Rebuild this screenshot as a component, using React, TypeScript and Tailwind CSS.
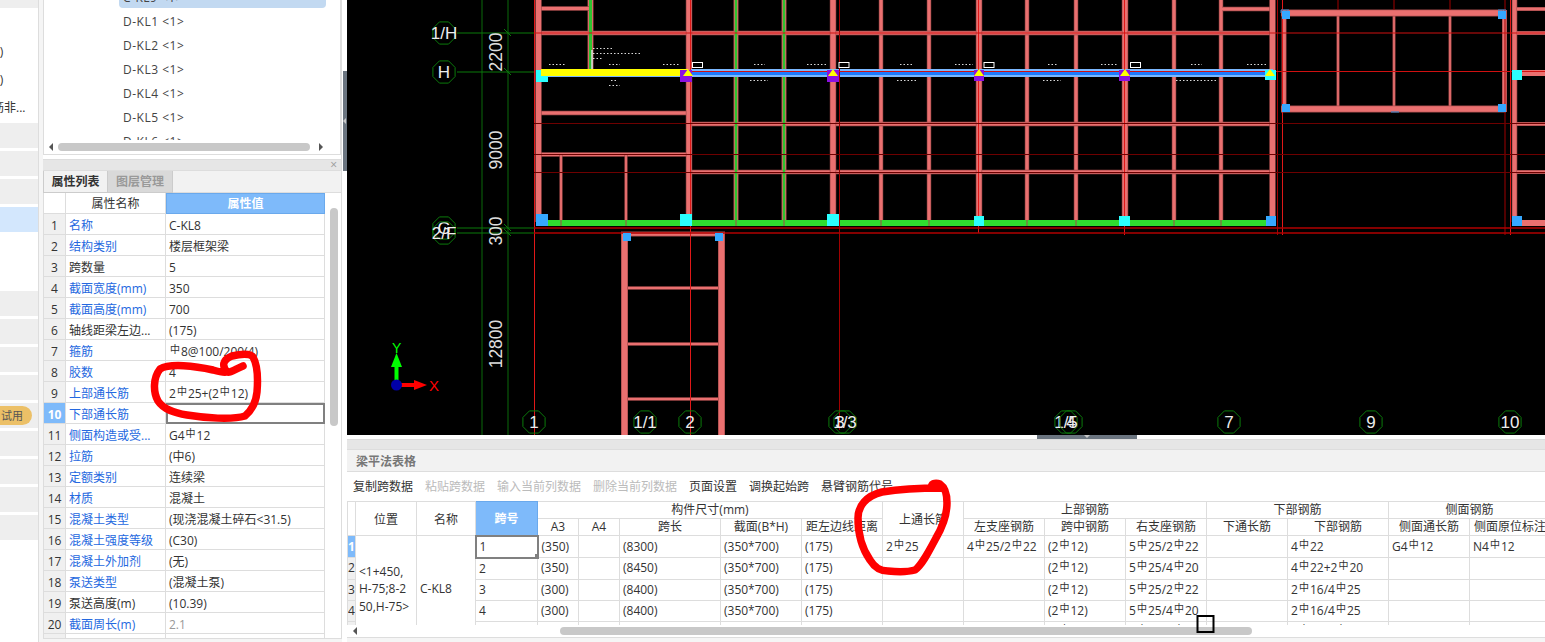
import React from "react";

const FONT = { fontFamily: '"Open Sans","Noto Sans CJK SC",sans-serif' };
const names = ["名称","结构类别","跨数量","截面宽度(mm)","截面高度(mm)","轴线距梁左边...","箍筋","胶数","上部通长筋","下部通长筋","侧面构造或受...","拉筋","定额类别","材质","混凝土类型","混凝土强度等级","混凝土外加剂","泵送类型","泵送高度(m)","截面周长(m)"];
const vals = ["C-KL8","楼层框架梁","5","350","700","(175)","⌀8@100/200(4)","4","2⌀25+(2⌀12)","","G4⌀12","(中6)","连续梁","混凝土","(现浇混凝土碎石<31.5)","(C30)","(无)","(混凝土泵)","(10.39)","2.1"];

function Rebar({ t }: { t: string }) {
  const parts = t.split("⌀");
  return (
    <>
      {parts.map((p, i) => (
        <React.Fragment key={i}>
          {i > 0 && <span className="relative -top-[3px] inline-block w-[12px] text-center text-[10px] leading-[10px]">中</span>}
          {p}
        </React.Fragment>
      ))}
    </>
  );
}

const rows = [
  ["1","(350)","","(8300)","(350*700)","(175)","2⌀25","4⌀25/2⌀22","(2⌀12)","5⌀25/2⌀22","","4⌀22","G4⌀12","N4⌀12"],
  ["2","(350)","","(8450)","(350*700)","(175)","","","(2⌀12)","5⌀25/4⌀20","","4⌀22+2⌀20","",""],
  ["3","(300)","","(8400)","(350*700)","(175)","","","(2⌀12)","5⌀25/2⌀22","","2⌀16/4⌀25","",""],
  ["4","(300)","","(8400)","(350*700)","(175)","","","(2⌀12)","5⌀25/4⌀20","","2⌀16/4⌀25","",""],
  ["","","","","","","","","(2⌀12)","5⌀25/4⌀20","","2⌀16/4⌀25","",""],
];

function Beam({ d, w }: { d: string; w: number }) {
  return (
    <>
      <path d={d} stroke="#a34a4a" strokeWidth={w} fill="none" />
      <path d={d} stroke="#ea7070" strokeWidth={Math.max(w - 1.4, 1)} fill="none" />
    </>
  );
}

const blocks: [number, number, number, number, string][] = [
  [536,70,12,12,"#2bffff"],[680,70,12,12,"#8b10e0"],[827,70,12,12,"#8b10e0"],[974,70,10,11,"#8b10e0"],[1119,70,11,11,"#8b10e0"],[1265,70,11,10,"#2bffff"],[1512,70,10,10,"#2bffff"],
  [536,214,12,12,"#35a8ff"],[680,214,12,12,"#2bffff"],[827,214,12,12,"#2bffff"],[974,216,10,10,"#2bffff"],[1119,216,11,10,"#2bffff"],[1266,216,10,10,"#35a8ff"],[1512,216,10,10,"#35a8ff"],
  [1282,11,8,8,"#35a8ff"],[1498,11,8,8,"#35a8ff"],[1282,104,8,8,"#35a8ff"],[1498,104,8,8,"#35a8ff"],[623,233,8,8,"#35a8ff"],[715,233,8,8,"#35a8ff"],
];

const bubbles: [number, number, string][] = [
  [444,33,"1/H"],[444,72,"H"],[444,228,"G"],[444,233,"2/F"],[534,422,"1"],[645,422,"1/1"],[690,422,"2"],[840,422,"3"],[845,422,"1/3"],[1066,422,"1/5"],[1071,422,"4"],[1229,422,"7"],[1371,422,"9"],[1510,422,"10"],
];

const dims: [number, number, string][] = [[502,52,"2200"],[502,150,"9000"],[502,231,"300"],[502,344,"12800"]];

function Cad() {
  return (
    <svg width="1198" height="435" viewBox="347 0 1198 435" className="block" fontFamily="Liberation Sans, sans-serif">
      <rect x="347" y="0" width="1198" height="435" fill="#000" />
      <path d="M482 0V435M508 0V435" stroke="#0b6b0b" strokeWidth="1" />
      <path d="M457 33H535M457 72H535M457 228H535M457 233H535" stroke="#0a7a0a" strokeWidth="1" />
      <path d="M504 29L511 36M504 68L511 75M504 224L511 231M504 229L511 236" stroke="#0a7a0a" strokeWidth="1" />

      <Beam d="M881 0V222M929 0V222M1027 0V222M1076 0V222M1174 0V222M1221 0V222" w={4.4} />
      <Beam d="M736 0V222M784 0V222" w={5} />
      <Beam d="M590.5 0V70" w={6} />
      <Beam d="M536 33H1275M536 8.5H590M536 113H690M690 124H1275M536 154.5H690M690 172H1275M1222 9H1274" w={4.4} />
      <Beam d="M561 155V226M626 155V226" w={3.2} />
      <Beam d="M538.5 0V222M689 0V222M833 0V222M979 0V222M1125 0V222M1272.5 0V222" w={6.4} />
      <Beam d="M1514.5 0V222" w={5.5} />
      <Beam d="M1517 9H1545M1517 33H1545M1517 124H1545M1517 172H1545" w={4} />
      <path d="M1520 73H1545M1517 223H1545" stroke="#ea7070" strokeWidth="6" />
      <Beam d="M1338 14V108M1394 14V108M1450 14V108" w={3} />
      <Beam d="M1281 13H1506M1281 109H1506" w={7} />
      <Beam d="M1284 10V112M1504.5 10V112" w={5} />
      <Beam d="M621 234H725" w={5} />
      <Beam d="M624.5 234V435M721.5 234V435" w={7} />
      <Beam d="M628 288H718M628 344H718M628 399H718" w={3.4} />

      <path d="M590.5 0V69" stroke="#2fc22f" strokeWidth="3" />
      <path d="M736 0V220M784 0V220" stroke="#2fc22f" strokeWidth="2.4" />

      <rect x="540" y="220" width="733" height="6" fill="#2fdc2f" />
      <path d="M561 220V226M626 220V226M736 220V226M784 220V226M881 220V226M929 220V226M1027 220V226M1076 220V226M1174 220V226M1221 220V226" stroke="#a34a4a" strokeWidth="1" />

      <rect x="690" y="69" width="583" height="8" fill="#7ab8ff" />
      <rect x="690" y="71" width="583" height="4" fill="#1e7bff" />
      <rect x="541" y="69" width="147" height="7" fill="#ffff00" />
      <rect x="541" y="76" width="147" height="1" fill="#7ab8ff" />

      <path d="M534.5 0V435M690.5 0V435M978.5 0V233M1124.5 0V235M1282.5 0V235M1510.5 0V235" stroke="#e01818" strokeWidth="1" />
      <path d="M839.5 0V430M1277.5 0V235M1505 0V235M1338 0V10M1394 0V10M1450 0V10" stroke="#a00000" strokeWidth="1" />
      <path d="M690 71.5H1545M534 33H1545" stroke="#d01010" strokeWidth="1" />
      <path d="M534 123.5H1545M534 154.5H1545M534 172.5H1545" stroke="#6e0000" strokeWidth="1" />
      <path d="M534 228H1545M534 233H1545" stroke="#b00000" strokeWidth="1.4" />

      {blocks.map(([x,y,w,h,c],i)=>(
        <rect key={i} x={x} y={y} width={w} height={h} fill={c} />
      ))}
      <rect x="541" y="69" width="139" height="7" fill="#ffff00" />
      {[688,833,979,1125,1270].map((x)=>(
        <path key={x} d={`M${x-5} 76L${x} 69L${x+5} 76Z`} fill="#ff0" />
      ))}
      <path d="M1281 10H1506V112H1281Z" fill="none" stroke="#2d8fd8" strokeWidth="1" strokeDasharray="8 209" />

      {[692,838.5,983.5,1130].map((x)=>(
        <rect key={x} x={x+0.5} y={62.5} width={10} height={5} fill="#000" stroke="#fff" strokeWidth="1" />
      ))}
      <path d="M592 50V69" stroke="#ddd" strokeWidth="1.5" />
      <g stroke="#fff" strokeWidth="1" strokeDasharray="1.5 2" opacity="0.85">
        <path d="M593 48.5H612M593 53.5H641M593 58.5H602M549 64.5H566M609 64.5H620M663 64.5H680M754 64.5H765M807 64.5H827M900 64.5H913M955 64.5H973M1048 64.5H1057M1101 64.5H1118M1191 64.5H1202M1247 64.5H1266" />
        <path d="M611 80.5H618M609 85.5H620M750 80.5H768M897 80.5H916M1043 80.5H1061M1176 80.5H1217" />
      </g>

      {bubbles.map(([x,y,t],i)=>(
        <g key={i}>
          <polygon points={Array.from({length:8},(_,k)=>{const a=Math.PI/8+k*Math.PI/4;return `${x+Math.cos(a)*12},${y+Math.sin(a)*12}`}).join(" ")} fill="none" stroke="#0b7a0b" />
          <text x={x} y={y+6} textAnchor="middle" fill="#eee" fontSize="17">{t}</text>
        </g>
      ))}
      {dims.map(([x,y,t])=>(
        <text key={t} transform={`rotate(-90 ${x} ${y})`} x={x} y={y} textAnchor="middle" fill="#ddd" fontSize="17.5">{t}</text>
      ))}

      <path d="M396.5 384V364" stroke="#0f0" strokeWidth="4" />
      <path d="M396.5 353L391 367H402Z" fill="#0f0" />
      <path d="M397 385H416" stroke="#f00" strokeWidth="4" />
      <path d="M427 385L414 380V390Z" fill="#f00" />
      <circle cx="396.5" cy="385" r="5.5" fill="#0000a8" />
      <text x="392" y="353" fill="#0f0" fontSize="14">Y</text>
      <text x="429" y="391" fill="#f00" fontSize="15">X</text>
    </svg>
  );
}

export default function App() {
  return (
    <div className="relative flex w-[1545px] h-[642px] overflow-hidden bg-[#f5f5f5] text-[12px] text-[#333]" style={FONT}>
      {/* left strip */}
      <div className="flex flex-col w-[39px] h-full bg-white border-r border-[#ddd] shrink-0 overflow-hidden">
        <div className="h-[8px] bg-[#eeeeee]" />
        <div className="h-[30px]" />
        <div className="h-[28px] leading-[28px] -ml-[7px] whitespace-nowrap">2)</div>
        <div className="h-[28px] leading-[28px] -ml-[7px] whitespace-nowrap">2)</div>
        <div className="h-[28px] leading-[28px] -ml-[8px] whitespace-nowrap">筋非...</div>
        <div className="h-[1px]" />
        <div className="flex flex-col gap-[3px]">
          <div className="h-[25px] bg-[#eeeeee]" />
          <div className="h-[25px] bg-[#eeeeee]" />
          <div className="h-[25px] bg-[#eeeeee]" />
          <div className="h-[25px] bg-[#d3e7fd]" />
        </div>
        <div className="h-[59px]" />
        <div className="flex flex-col gap-[3px]">
          <div className="h-[25px] bg-[#eeeeee]" />
          <div className="h-[25px] bg-[#eeeeee]" />
          <div className="h-[25px] bg-[#eeeeee]" />
          <div className="h-[25px] bg-[#eeeeee]" />
          <div className="h-[25px] bg-[#eeeeee] pt-[3px]">
            <div className="h-[19px] w-[32px] rounded-r-full bg-[#ecc067] text-[11px] leading-[19px] pl-[1px] text-[#555]">试用</div>
          </div>
          <div className="h-[25px] bg-[#eeeeee]" />
          <div className="h-[25px] bg-[#eeeeee]" />
          <div className="h-[25px] bg-[#eeeeee]" />
          <div className="h-[25px] bg-[#eeeeee]" />
        </div>
      </div>

      <div className="w-[4px] shrink-0" />

      {/* middle panel */}
      <div className="flex flex-col w-[299px] h-[639px] shrink-0 bg-white border-r border-b border-[#ddd]">
        <div className="h-[155px] border-x border-b border-[#ddd] relative overflow-hidden flex flex-col shrink-0">
          <div className="h-[8px] ml-[75px] mr-[14px] bg-[#c2d9f1] rounded-b overflow-hidden shrink-0">
            <div className="-mt-[14px] pl-[4px] leading-[24px] tracking-[0.5px] text-[#444] whitespace-nowrap">C-KL9 &lt;1&gt;</div>
          </div>
          <div className="flex-1 pl-[79px] pt-[2px] text-[#444]">
            {[1,2,3,4,5,6].map((n)=>(
              <div key={n} className="h-[24px] leading-[24px] tracking-[0.5px] whitespace-nowrap">D-KL{n} &lt;1&gt;</div>
            ))}
          </div>
          <div className="absolute left-0 right-0 bottom-0 h-[14px] bg-white flex items-center">
            <div className="w-0 h-0 ml-[5px] border-y-[4px] border-y-transparent border-r-[4px] border-r-[#555]" />
            <div className="ml-[5px] w-[252px] h-[8px] rounded-full bg-[#c8c8c8]" />
            <div className="w-0 h-0 ml-[9px] border-y-[4px] border-y-transparent border-l-[4px] border-l-[#555]" />
          </div>
        </div>
        <div className="h-[4px] bg-white shrink-0" />
        <div className="h-[12px] bg-[#e6e6e6] border-y border-[#ddd] flex justify-end items-center pr-[4px] text-[#999] text-[12px] leading-none shrink-0">×</div>
        <div className="h-[22px] bg-[#f2f2f2] flex shrink-0">
          <div className="w-[65px] border border-t-0 border-[#ccc] text-center font-bold leading-[21px]">属性列表</div>
          <div className="w-[65px] border-r border-b border-[#ccc] bg-[#d9d9d9] text-center font-bold text-[#999] leading-[21px]">图层管理</div>
          <div className="flex-1 border-b border-[#ddd]" />
        </div>
        <div className="flex flex-1 min-h-0 overflow-hidden border-l border-[#ddd]">
          <div className="w-[282px]">
            <div className="flex h-[21px] leading-[22px]">
              <div className="w-[22px] border-r border-b border-[#ddd]" />
              <div className="w-[100px] border-r border-b border-[#ddd] text-center">属性名称</div>
              <div className="flex-1 bg-[#7ebafa] border border-[#6aa9ec] text-center font-bold text-white leading-[20px]">属性值</div>
            </div>
            {names.map((n,i)=>{
              const sel=i===9;
              const plain=i===2||i===5||i===18;
              return (
                <div key={n} className="flex h-[21px] leading-[23px]">
                  <div className={`w-[22px] border-r border-b border-[#ddd] text-center ${sel?"bg-[#7ebafa] text-white font-bold":"bg-[#f0f0f0]"}`}>{i+1}</div>
                  <div className={`w-[100px] border-r border-b border-[#ddd] pl-[3px] whitespace-nowrap ${plain?"text-[#333]":"text-[#2468e0]"}`}>{n}</div>
                  <div className={`flex-1 pl-[3px] whitespace-nowrap ${sel?"border-2 border-[#808080]":"border-r border-b border-[#ddd]"} ${i===19?"text-[#999]":""}`}><Rebar t={vals[i]} /></div>
                </div>
              );
            })}
            <div className="flex h-[4px]">
              <div className="w-[22px] border-r border-[#ddd] bg-[#f0f0f0]" />
              <div className="w-[100px] border-r border-[#ddd]" />
              <div className="flex-1 border-r border-[#ddd]" />
            </div>
          </div>
          <div className="w-[16px] relative">
            <div className="absolute left-[5px] top-[15px] w-[8px] h-[218px] rounded-full bg-[#c8c8c8]" />
          </div>
        </div>
      </div>

      {/* vertical splitter */}
      <div className="relative w-[5px] shrink-0 bg-white">
        <div className="absolute left-[1px] top-[71px] w-[4px] h-[100px] bg-[#6b7580] flex items-center">
          <div className="w-0 h-0 border-y-[3px] border-y-transparent border-r-[3px] border-r-[#c8c8c8]" />
        </div>
      </div>

      {/* right */}
      <div className="flex-1 flex flex-col min-w-0">
        <div className="shrink-0">
          <Cad />
        </div>
        <div className="relative h-[4px] bg-white shrink-0">
          <div className="absolute left-[690px] top-0 w-[100px] h-[4px] bg-[#6b7580] flex justify-center">
            <div className="w-0 h-0 border-x-[3px] border-x-transparent border-t-[3px] border-t-[#c8c8c8]" />
          </div>
        </div>
        <div className="h-[11px] bg-[#e6e6e6] border-y border-[#ddd] shrink-0" />
        <div className="h-[22px] bg-[#f2f2f2] border-b border-[#ddd] pl-[9px] font-bold text-[#777] leading-[23px] shrink-0">梁平法表格</div>
        <div className="h-[29px] bg-white flex items-center gap-[12px] pl-[6px] pt-[1px] shrink-0 whitespace-nowrap">
          <span>复制跨数据</span>
          <span className="text-[#bbb]">粘贴跨数据</span>
          <span className="text-[#bbb]">输入当前列数据</span>
          <span className="text-[#bbb]">删除当前列数据</span>
          <span>页面设置</span>
          <span>调换起始跨</span>
          <span>悬臂钢筋代号</span>
        </div>
        <div className="bg-white h-[124px] overflow-hidden shrink-0">
          <table className="border-collapse table-fixed w-[1203px] text-[12px]">
            <colgroup>
              <col className="w-[8px]" />
              <col className="w-[61px]" />
              <col className="w-[59px]" />
              <col className="w-[62px]" />
              <col className="w-[41px]" />
              <col className="w-[41px]" />
              <col className="w-[101px]" />
              <col className="w-[81px]" />
              <col className="w-[81px]" />
              <col className="w-[81px]" />
              <col className="w-[81px]" />
              <col className="w-[81px]" />
              <col className="w-[81px]" />
              <col className="w-[81px]" />
              <col className="w-[101px]" />
              <col className="w-[81px]" />
              <col className="w-[81px]" />
            </colgroup>
            <thead>
              <tr className="h-[17px] leading-[16px]">
                <th rowSpan={2} className="border border-[#ddd] font-normal" />
                <th rowSpan={2} className="border border-[#ddd] font-normal pt-[2px]">位置</th>
                <th rowSpan={2} className="border border-[#ddd] font-normal pt-[2px]">名称</th>
                <th rowSpan={2} className="border border-[#6aa9ec] bg-[#7ebafa] text-white font-bold pt-[2px]">跨号</th>
                <th colSpan={5} className="border border-[#ddd] font-normal">构件尺寸(mm)</th>
                <th rowSpan={2} className="border border-[#ddd] font-normal pt-[2px]">上通长筋</th>
                <th colSpan={3} className="border border-[#ddd] font-normal">上部钢筋</th>
                <th colSpan={2} className="border border-[#ddd] font-normal">下部钢筋</th>
                <th colSpan={2} className="border border-[#ddd] font-normal">侧面钢筋</th>
              </tr>
              <tr className="h-[17px] leading-[16px]">
                {["A3","A4","跨长","截面(B*H)","距左边线距离","左支座钢筋","跨中钢筋","右支座钢筋","下通长筋","下部钢筋","侧面通长筋","侧面原位标注"].map((h)=>(
                  <th key={h} className="border border-[#ddd] font-normal whitespace-nowrap overflow-hidden">{h}</th>
                ))}
              </tr>
            </thead>
            <tbody>
              {rows.map((r,ri)=>(
                <tr key={ri} className="h-[21px] leading-[20px]">
                  <td className={`border border-[#ddd] p-0 overflow-hidden text-center ${ri===0?"bg-[#7ebafa] text-white font-bold":"bg-[#f0f0f0]"}`}>{ri<4?ri+1:""}</td>
                  {ri===0 && (
                    <>
                      <td rowSpan={5} className="border border-[#ddd] px-[3px] leading-[17.5px] whitespace-nowrap">&lt;1+450,<br/>H-75;8-2<br/>50,H-75&gt;</td>
                      <td rowSpan={5} className="border border-[#ddd] px-[3px]">C-KL8</td>
                    </>
                  )}
                  {r.map((c,ci)=>(
                    <td key={ci} className={`p-0 pl-[3px] whitespace-nowrap overflow-hidden ${ri===0&&ci===0?"border-2 border-[#808080]":"border border-[#ddd]"}`}><Rebar t={c} /></td>
                  ))}
                </tr>
              ))}
            </tbody>
          </table>
        </div>
        <div className="relative h-[13px] bg-white border-b border-[#ddd] shrink-0">
          <div className="absolute left-[6px] top-[2px] w-0 h-0 border-y-[4px] border-y-transparent border-r-[4px] border-r-[#555]" />
          <div className="absolute left-[213px] top-[2px] w-[692px] h-[8px] rounded-full bg-[#c8c8c8]" />
        </div>
      </div>

      {/* hand-drawn annotation */}
      <svg className="absolute left-0 top-0 pointer-events-none" width="1545" height="642">
        <path d="M243 366C234 370 230 373 227 372C222 366 222 360 232 356C240 354 250 353 253 357C258 366 258 380 257 392C256 402 252 410 245 416C232 420 205 418 187 415C175 413 164 410 158 401C153 392 153 378 160 369C170 363 195 366 213 370C220 372 224 373 227 372" fill="none" stroke="#f00" strokeWidth="7.5" strokeLinecap="round" strokeLinejoin="round" />
        <path d="M942 488C925 488 900 489 882 492C866 496 858 506 858 518C858 535 863 550 870 560C875 568 880 571 888 571C898 572 908 572 915 570C922 565 928 553 936 538C943 526 947 514 947 503C947 495 946 488 940 484C935 482 930 484 932 488" fill="none" stroke="#f00" strokeWidth="7.5" strokeLinecap="round" strokeLinejoin="round" />
        <rect x="535" y="554" width="4" height="4" fill="#808080" />
        <rect x="1197.5" y="616" width="16" height="16" fill="none" stroke="#000" strokeWidth="2" />
      </svg>
    </div>
  );
}
